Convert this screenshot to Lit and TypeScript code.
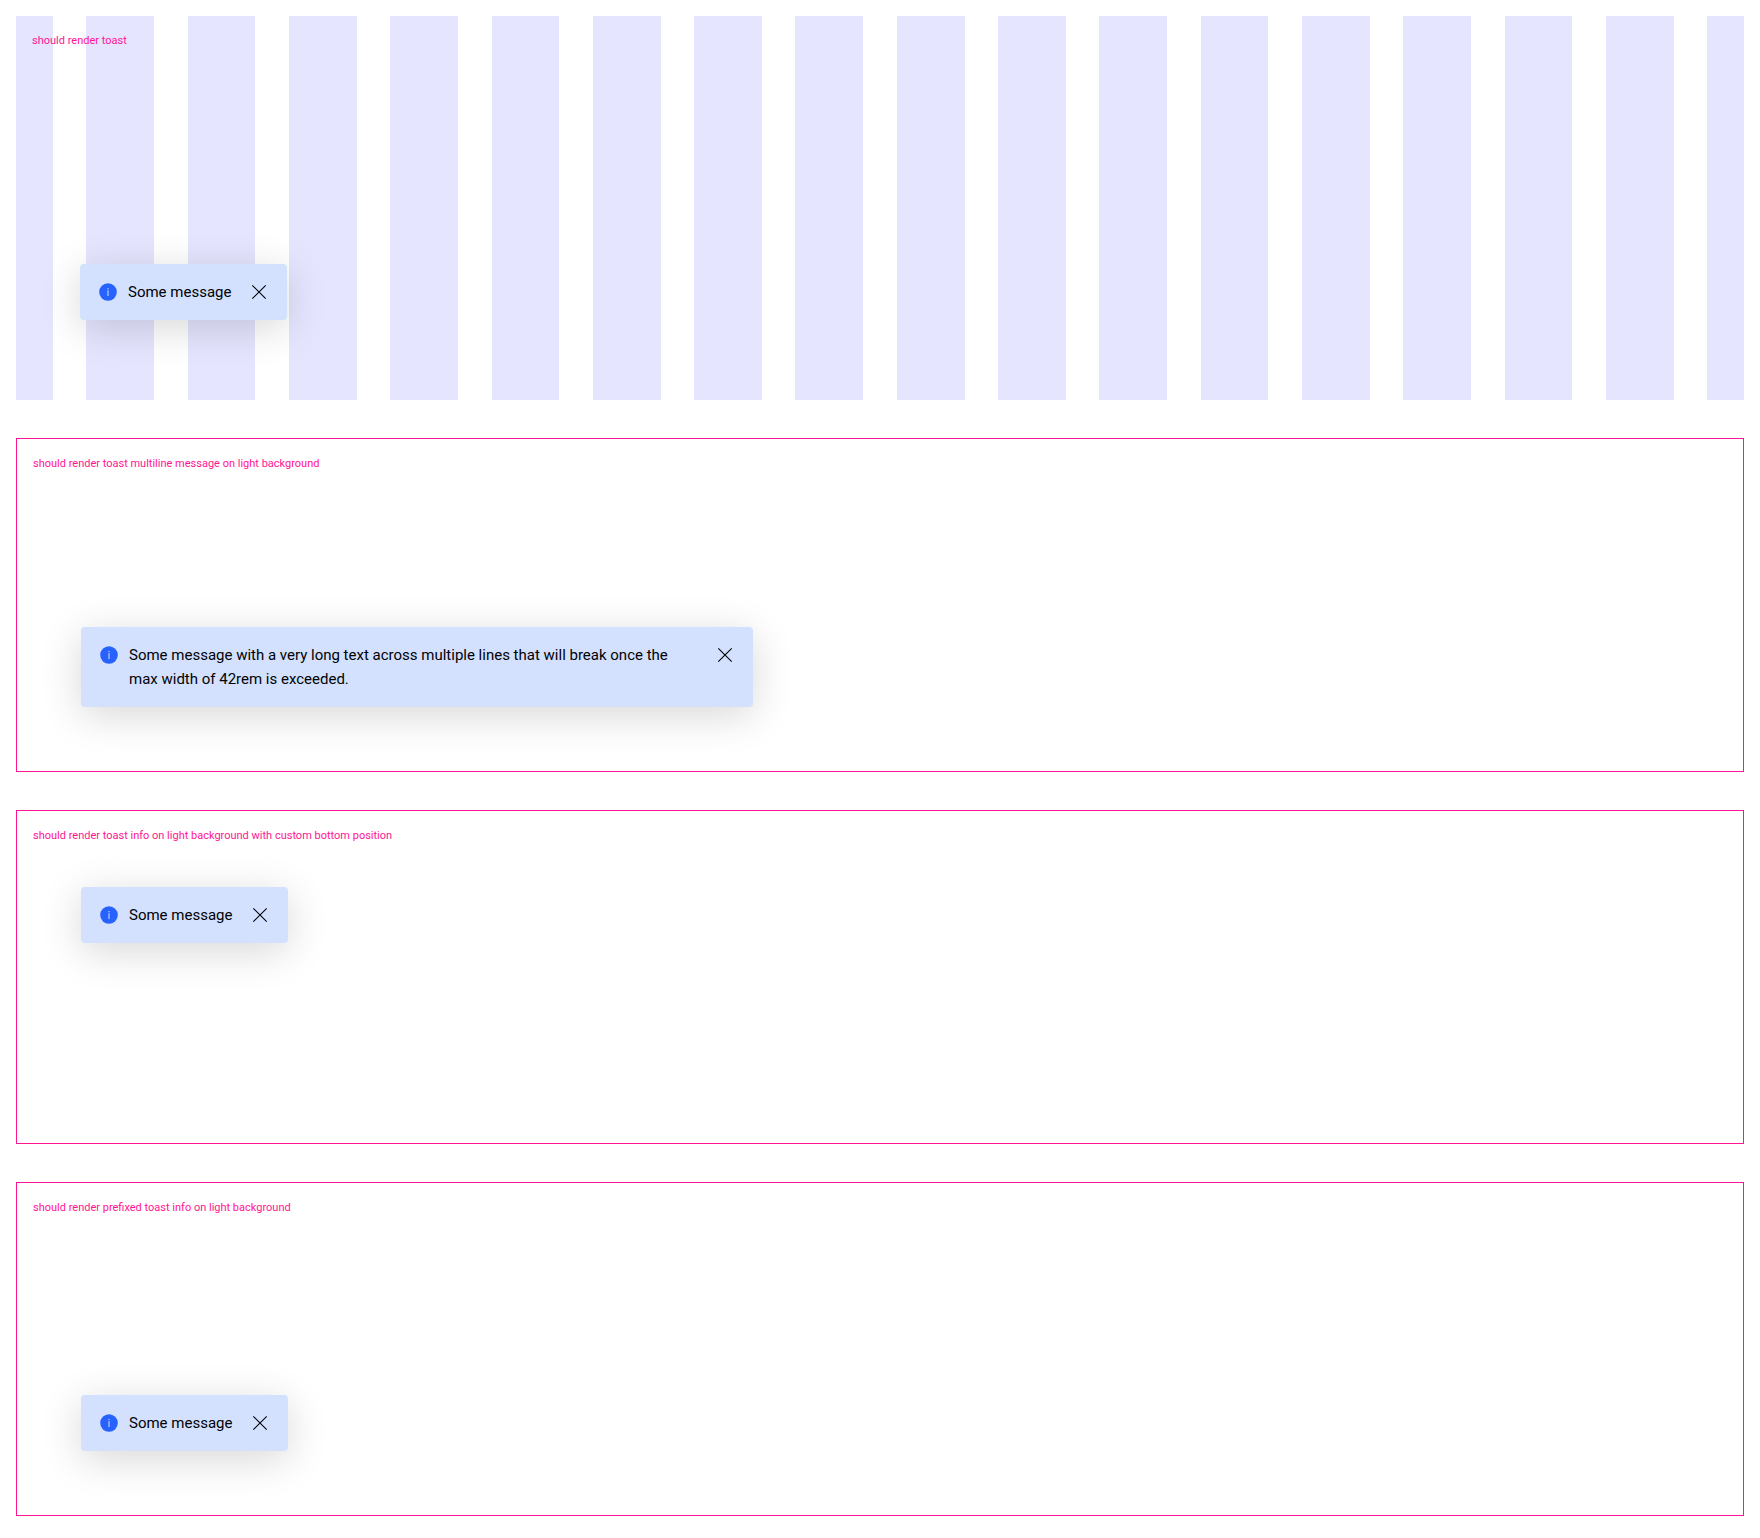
import { LitElement, html, css } from "lit";
import { customElement, property } from "lit/decorators.js";

@customElement("toast-item")
class ToastItem extends LitElement {
  @property() message = "";

  static styles = css`
    :host {
      display: flex;
      box-sizing: border-box;
      width: fit-content;
      max-width: 42rem;
      padding: 16px;
      border-radius: 4px;
      background: #d3e1ff;
      color: #010205;
      box-shadow: 0 8px 40px rgba(0, 0, 0, 0.16);
      font: 15px/24px Roboto, "Liberation Sans", sans-serif;
    }
    .icon {
      display: block;
      flex: none;
      width: 24px;
      height: 24px;
    }
    .text {
      flex: 1;
      margin: 0 16px 0 8px;
    }
    .close {
      flex: none;
      width: 24px;
      height: 24px;
      padding: 0;
      border: 0;
      background: none;
      color: inherit;
      cursor: pointer;
    }
  `;

  render() {
    return html`
      <svg class="icon" viewBox="0 0 24 24" aria-hidden="true">
        <circle cx="12" cy="12" r="8.8" fill="#2762ff" />
        <path d="M11.5 8h1v1.2h-1zM11.5 10.3h1V16h-1z" fill="#d3e1ff" />
      </svg>
      <p class="text">${this.message}</p>
      <button class="close" type="button" aria-label="Close notification message">
        <svg class="icon" viewBox="0 0 24 24" aria-hidden="true">
          <path d="M5.3 5.3 18.7 18.7M18.7 5.3 5.3 18.7" fill="none" stroke="currentColor" stroke-width="1.1" />
        </svg>
      </button>
    `;
  }
}

@customElement("app-root")
class AppRoot extends LitElement {
  static styles = css`
    :host {
      display: flex;
      flex-direction: column;
      gap: 38px;
      padding: 16px 16px 22px;
      background: #fff;
    }
    .panel {
      box-sizing: border-box;
      display: flex;
      flex-direction: column;
      justify-content: space-between;
      min-height: 334px;
      padding: 16px 64px 64px 16px;
      border: 1px solid #ff1493;
    }
    .title {
      margin: 0;
      color: #ff1493;
      font: 400 11px/18px Roboto, "Liberation Sans", sans-serif;
    }
    .panel toast-item {
      margin-left: 48px;
    }
    .raised {
      padding-bottom: 200px;
    }
    .grid {
      position: relative;
      min-height: 384px;
      padding-bottom: 80px;
      border: 0;
    }
    .grid .title,
    .grid toast-item {
      position: relative;
    }
    .columns {
      position: absolute;
      inset: 0;
      display: grid;
      grid-template-columns: calc(3.75% - 28px) repeat(16, 1fr) calc(3.75% - 28px);
      column-gap: calc(1.25% + 12px);
    }
    .column {
      background: #e5e5ff;
    }
  `;

  render() {
    return html`
      <section class="panel grid">
        <div class="columns" aria-hidden="true">
          ${Array.from({ length: 18 }, () => html`<div class="column"></div>`)}
        </div>
        <h2 class="title">should render toast</h2>
        <toast-item message="Some message"></toast-item>
      </section>
      <section class="panel">
        <h2 class="title">should render toast multiline message on light background</h2>
        <toast-item
          message="Some message with a very long text across multiple lines that will break once the max width of 42rem is exceeded."
        ></toast-item>
      </section>
      <section class="panel raised">
        <h2 class="title">should render toast info on light background with custom bottom position</h2>
        <toast-item message="Some message"></toast-item>
      </section>
      <section class="panel">
        <h2 class="title">should render prefixed toast info on light background</h2>
        <toast-item message="Some message"></toast-item>
      </section>
    `;
  }
}
